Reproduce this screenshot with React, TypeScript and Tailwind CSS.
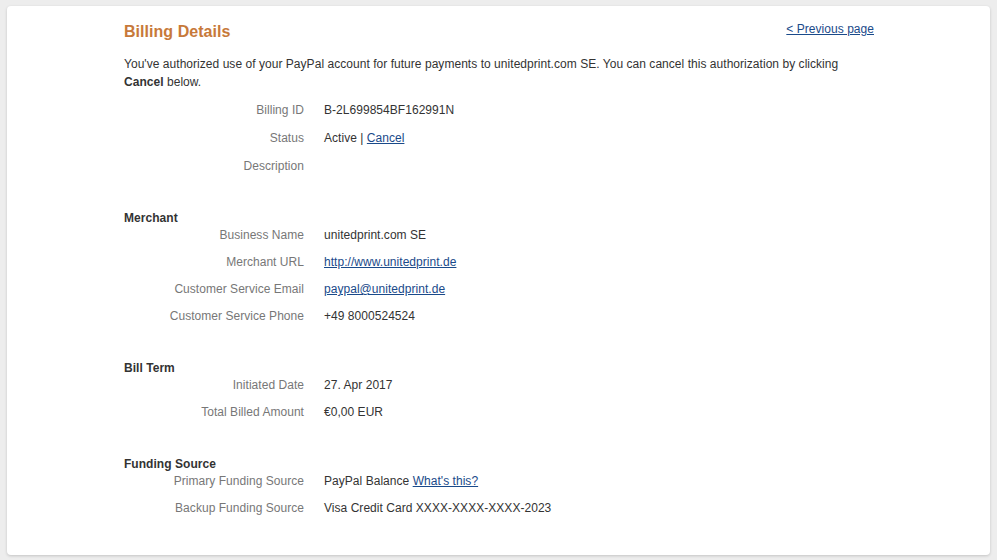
const font = { fontFamily: '"Liberation Sans", Arial, sans-serif' }

type Row = { label: string; value: React.ReactNode }

function A({ children }: { children: React.ReactNode }) {
  return <a href="#" className="text-[#1a4a8a] underline">{children}</a>
}

function Rows({ rows, gap, top }: { rows: Row[]; gap: string; top: string }) {
  return (
    <div className={`flex flex-col ${gap} ${top}`}>
      {rows.map(r => (
        <div key={r.label} className="flex leading-[14px]">
          <div className="w-[180px] shrink-0 text-right text-[#777]">{r.label}</div>
          <div className="pl-[20px] text-[#333]">{r.value}</div>
        </div>
      ))}
    </div>
  )
}

function Section({ title, rows }: { title: string; rows: Row[] }) {
  return (
    <div className="mt-[38px]">
      <p className="font-bold text-[#333] leading-[14px]">{title}</p>
      <Rows rows={rows} gap="gap-[13px]" top="mt-[3px]" />
    </div>
  )
}

export default function App() {
  return (
    <div className="min-h-[560px] bg-[#ededed] pt-[6px] pl-[7px] pr-[7px] pb-[7px]" style={font}>
      <div className="w-[983px] bg-white rounded-[4px] shadow-[0_1px_3px_rgba(0,0,0,0.18)] pl-[117px] pr-[116px] pt-[15px] pb-[40px] text-[12px] tracking-[0.04px]">
        <div className="flex items-start justify-between">
          <h1 className="text-[16px] leading-[20px] font-bold text-[#c7793a] pt-[1px]">Billing Details</h1>
          <a href="#" className="text-[#1a4a8a] underline leading-[14px] pt-[1px]">&lt; Previous page</a>
        </div>
        <p className="mt-[13px] leading-[18px] text-[#333]">
          You've authorized use of your PayPal account for future payments to unitedprint.com SE. You can cancel this authorization by clicking <b>Cancel</b> below.
        </p>
        <Rows
          gap="gap-[14px]"
          top="mt-[12px]"
          rows={[
            { label: 'Billing ID', value: 'B-2L699854BF162991N' },
            { label: 'Status', value: <>Active | <A>Cancel</A></> },
            { label: 'Description', value: '' },
          ]}
        />
        <Section
          title="Merchant"
          rows={[
            { label: 'Business Name', value: 'unitedprint.com SE' },
            { label: 'Merchant URL', value: <A>http://www.unitedprint.de</A> },
            { label: 'Customer Service Email', value: <A>paypal@unitedprint.de</A> },
            { label: 'Customer Service Phone', value: '+49 8000524524' },
          ]}
        />
        <Section
          title="Bill Term"
          rows={[
            { label: 'Initiated Date', value: '27. Apr 2017' },
            { label: 'Total Billed Amount', value: '€0,00 EUR' },
          ]}
        />
        <Section
          title="Funding Source"
          rows={[
            { label: 'Primary Funding Source', value: <>PayPal Balance <A>What's this?</A></> },
            { label: 'Backup Funding Source', value: 'Visa Credit Card XXXX-XXXX-XXXX-2023' },
          ]}
        />
      </div>
    </div>
  )
}
